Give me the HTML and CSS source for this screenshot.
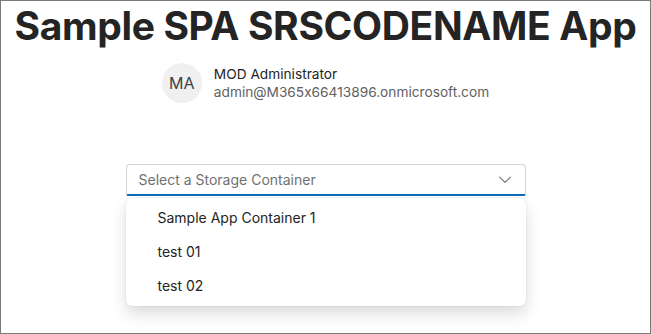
FILE: index.html
```html
<!DOCTYPE html>
<html lang="en">

<head>
    <meta charset="UTF-8">
    <meta name="viewport" content="width=device-width, initial-scale=1.0">
    <title>Sample SPA</title>
    <link rel="stylesheet" href="styles.css">
</head>

<body>
    <div class="page">
        <h1 class="title">Sample SPA SRSCODENAME App</h1>
        <div class="persona">
            <div class="avatar">MA</div>
            <div class="persona-text">
                <div class="name">MOD Administrator</div>
                <div class="email">admin@M365x66413896.onmicrosoft.com</div>
            </div>
        </div>
        <div class="dropdown">
            <button class="dropdown-button">
                <span class="placeholder">Select a Storage Container</span>
                <svg class="chevron" width="20" height="20" viewBox="0 0 20 20">
                    <path d="M4.6 7.1 L10 12.3 L15.4 7.1" fill="none" stroke="#707070" stroke-width="1.1" stroke-linecap="round" stroke-linejoin="round" />
                </svg>
            </button>
            <div class="listbox">
                <div class="option">Sample App Container 1</div>
                <div class="option">test 01</div>
                <div class="option">test 02</div>
            </div>
        </div>
    </div>
</body>

</html>
```

FILE: styles.css
```css
html,
body {
    margin: 0;
}

body {
    font-family: Inter, "Noto Sans", sans-serif;
    font-feature-settings: "calt" 0;
    color: #242424;
}

.page {
    box-sizing: border-box;
    width: 651px;
    height: 334px;
    border: 1px solid #7a7a7a;
    display: flex;
    flex-direction: column;
    align-items: center;
    overflow: hidden;
}

.title {
    margin: 0;
    font-size: 39px;
    line-height: 50px;
    font-weight: 700;
    letter-spacing: -0.35px;
}

.persona {
    display: flex;
    align-items: center;
    gap: 12px;
    margin-top: 12px;
}

.avatar {
    width: 40px;
    height: 40px;
    border-radius: 50%;
    background-color: #f0f0f0;
    display: flex;
    align-items: center;
    justify-content: center;
    font-size: 16px;
    color: #424242;
}

.persona-text {
    display: flex;
    flex-direction: column;
}

.name {
    font-size: 13.7px;
    line-height: 18px;
}

.email {
    font-size: 13.7px;
    line-height: 18px;
    color: #616161;
}

.dropdown {
    margin-top: 61px;
    width: 400px;
}

.dropdown-button {
    box-sizing: border-box;
    width: 100%;
    height: 32px;
    display: flex;
    align-items: center;
    justify-content: space-between;
    padding: 0 10px 0 12px;
    background: #fff;
    border: 1px solid #d1d1d1;
    border-bottom: 2px solid #0f6cbd;
    border-radius: 4px 4px 2px 2px;
    font-family: inherit;
    font-feature-settings: "calt" 0;
    font-size: 14px;
    color: #707070;
}

.listbox {
    margin-top: 2px;
    padding: 2px 4px 4px;
    background: #fff;
    border-radius: 6px;
    box-shadow: 0 0 2px rgba(0, 0, 0, 0.12), 0 8px 16px rgba(0, 0, 0, 0.14);
}

.option {
    height: 34px;
    display: flex;
    align-items: center;
    padding-left: 28px;
    font-size: 14px;
    color: #242424;
}
```
